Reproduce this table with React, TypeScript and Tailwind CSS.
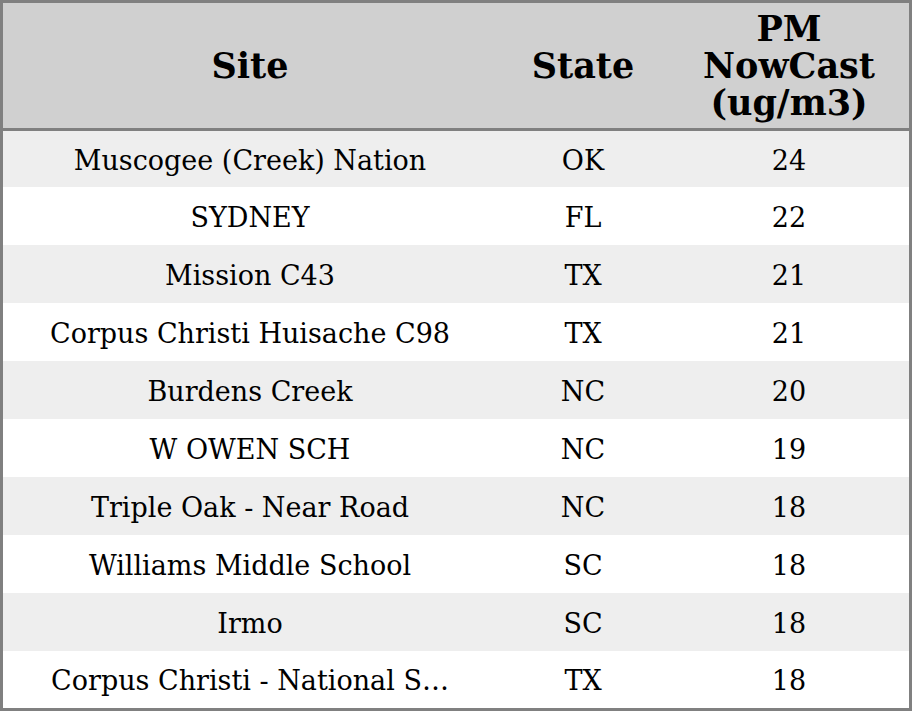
import React from "react";

const rows: [string, string, string][] = [
  ["Muscogee (Creek) Nation", "OK", "24"],
  ["SYDNEY", "FL", "22"],
  ["Mission C43", "TX", "21"],
  ["Corpus Christi Huisache C98", "TX", "21"],
  ["Burdens Creek", "NC", "20"],
  ["W OWEN SCH", "NC", "19"],
  ["Triple Oak - Near Road", "NC", "18"],
  ["Williams Middle School", "SC", "18"],
  ["Irmo", "SC", "18"],
  ["Corpus Christi - National S…", "TX", "18"],
];

export default function App() {
  return (
    <div
      className="w-[912px] h-[711px] border-[3px] border-[#808080] flex flex-col bg-white text-black"
      style={{ fontFamily: '"DejaVu Serif", serif' }}
    >
      <div className="h-[125px] bg-[#d0d0d0] grid grid-cols-[494px_172px_240px] items-center text-center font-bold text-[35px] leading-[37px]">
        <div>Site</div>
        <div>State</div>
        <div>
          PM
          <br />
          NowCast
          <br />
          (ug/m3)
        </div>
      </div>
      <div className="h-[3px] bg-[#808080]" />
      <div className="flex-1 grid grid-rows-[56px_repeat(8,58px)_57px] text-[27px]">
        {rows.map((r, i) => (
          <div
            key={i}
            className={`grid grid-cols-[494px_172px_240px] items-center text-center pt-[4px] ${
              i % 2 === 0 ? "bg-[#eeeeee]" : "bg-white"
            }`}
          >
            <div className="whitespace-nowrap overflow-hidden">{r[0]}</div>
            <div>{r[1]}</div>
            <div>{r[2]}</div>
          </div>
        ))}
      </div>
    </div>
  );
}
